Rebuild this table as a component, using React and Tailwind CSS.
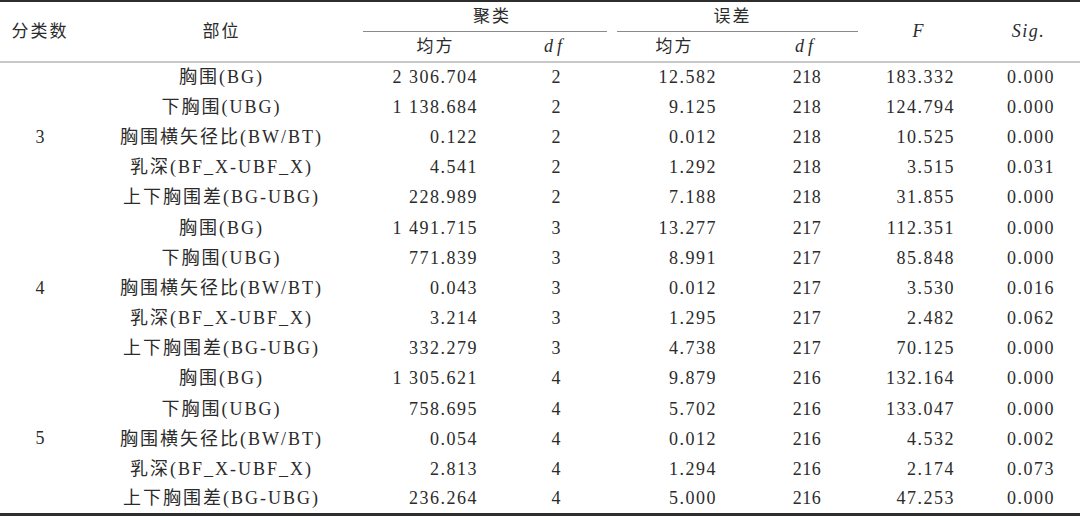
import React from "react";

const groups = [
  {
    k: "3",
    rows: [
      ["胸围(BG)", "2 306.704", "2", "12.582", "218", "183.332", "0.000"],
      ["下胸围(UBG)", "1 138.684", "2", "9.125", "218", "124.794", "0.000"],
      ["胸围横矢径比(BW/BT)", "0.122", "2", "0.012", "218", "10.525", "0.000"],
      ["乳深(BF_X-UBF_X)", "4.541", "2", "1.292", "218", "3.515", "0.031"],
      ["上下胸围差(BG-UBG)", "228.989", "2", "7.188", "218", "31.855", "0.000"],
    ],
  },
  {
    k: "4",
    rows: [
      ["胸围(BG)", "1 491.715", "3", "13.277", "217", "112.351", "0.000"],
      ["下胸围(UBG)", "771.839", "3", "8.991", "217", "85.848", "0.000"],
      ["胸围横矢径比(BW/BT)", "0.043", "3", "0.012", "217", "3.530", "0.016"],
      ["乳深(BF_X-UBF_X)", "3.214", "3", "1.295", "217", "2.482", "0.062"],
      ["上下胸围差(BG-UBG)", "332.279", "3", "4.738", "217", "70.125", "0.000"],
    ],
  },
  {
    k: "5",
    rows: [
      ["胸围(BG)", "1 305.621", "4", "9.879", "216", "132.164", "0.000"],
      ["下胸围(UBG)", "758.695", "4", "5.702", "216", "133.047", "0.000"],
      ["胸围横矢径比(BW/BT)", "0.054", "4", "0.012", "216", "4.532", "0.002"],
      ["乳深(BF_X-UBF_X)", "2.813", "4", "1.294", "216", "2.174", "0.073"],
      ["上下胸围差(BG-UBG)", "236.264", "4", "5.000", "216", "47.253", "0.000"],
    ],
  },
];

const font = { fontFamily: '"Liberation Serif", "Noto Sans CJK SC", serif' };

export default function App() {
  return (
    <div className="w-[1080px] h-[516px] bg-white overflow-hidden text-[#2b2b2b]" style={font}>
      <table className="w-[1080px] table-fixed border-collapse border-t-2 border-b-[3px] border-[#2e2e2e]">
        <colgroup>
          <col className="w-[80px]" />
          <col className="w-[283px]" />
          <col className="w-[137px]" />
          <col className="w-[112px]" />
          <col className="w-[133px]" />
          <col className="w-[118px]" />
          <col className="w-[112px]" />
          <col className="w-[105px]" />
        </colgroup>
        <thead>
          <tr className="h-[30px]">
            <th rowSpan={2} className="p-0 font-normal text-[17px] tracking-[2px] text-center align-middle">分类数</th>
            <th rowSpan={2} className="p-0 font-normal text-[17px] tracking-[2px] text-center align-middle">部位</th>
            <th colSpan={2} className="p-0 font-normal align-bottom">
              <div className="h-[30px] mr-[5px] flex items-center justify-center border-b border-[#8a8a8a] text-[17px] tracking-[2px] pl-[14px]">聚类</div>
            </th>
            <th colSpan={2} className="p-0 font-normal align-bottom">
              <div className="h-[30px] mx-[5px] flex items-center justify-center border-b border-[#8a8a8a] text-[17px] tracking-[2px] pr-[10px]">误差</div>
            </th>
            <th rowSpan={2} className="p-0 font-normal italic text-[18px] text-center align-middle pr-[2px]">F</th>
            <th rowSpan={2} className="p-0 font-normal italic text-[18px] tracking-[1.5px] text-center align-middle pl-[2px]">Sig.</th>
          </tr>
          <tr className="h-[30px] border-b-2 border-[#c8c8c8]">
            <th className="p-0 font-normal text-[17px] tracking-[2px] text-center pl-[8px]">均方</th>
            <th className="p-0 font-normal italic text-[18px] tracking-[4px] text-center pr-[2px]">df</th>
            <th className="p-0 font-normal text-[17px] tracking-[2px] text-center pr-[8px]">均方</th>
            <th className="p-0 font-normal italic text-[18px] tracking-[4px] text-center pl-[4px]">df</th>
          </tr>
        </thead>
        <tbody>
          {groups.map((g) =>
            g.rows.map((r, i) => (
              <tr key={g.k + i} className="h-[30.2px]">
                {i === 0 && (
                  <td rowSpan={5} className="p-0 text-[18px] text-center align-middle">{g.k}</td>
                )}
                <td className="p-0 text-[18px] tracking-[2px] text-center whitespace-nowrap">{r[0]}</td>
                <td className="p-0 text-[18px] tracking-[1.5px] text-right pr-[22px] whitespace-nowrap">{r[1]}</td>
                <td className="p-0 text-[18px] text-center">{r[2]}</td>
                <td className="p-0 text-[18px] tracking-[1.5px] text-right pr-[28px] whitespace-nowrap">{r[3]}</td>
                <td className="p-0 text-[18px] tracking-[0.5px] text-center pl-[6px]">{r[4]}</td>
                <td className="p-0 text-[18px] tracking-[1.5px] text-right pr-[20px] whitespace-nowrap">{r[5]}</td>
                <td className="p-0 text-[18px] tracking-[1.5px] text-right pr-[25px] whitespace-nowrap">{r[6]}</td>
              </tr>
            ))
          )}
        </tbody>
      </table>
    </div>
  );
}
